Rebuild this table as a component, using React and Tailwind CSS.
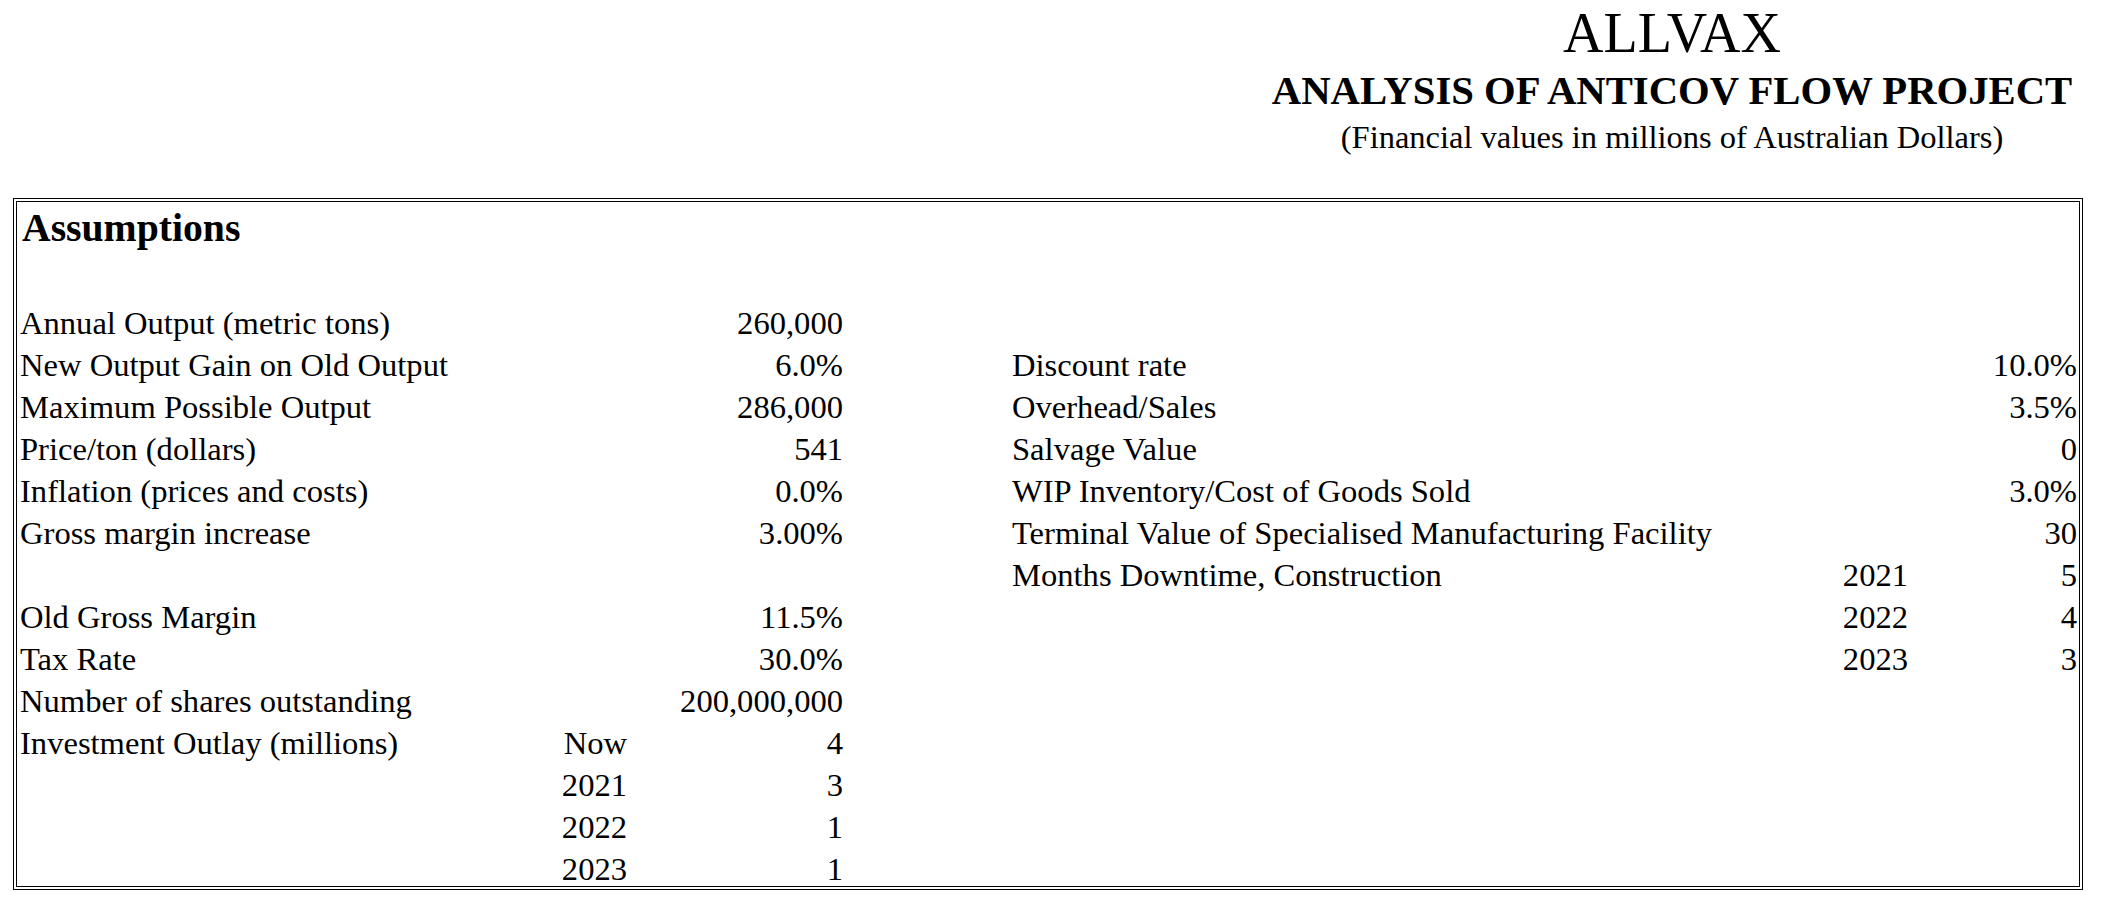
import React from "react";

const rows = [
  ["Annual Output (metric tons)", "", "260,000", "", "", ""],
  ["New Output Gain on Old Output", "", "6.0%", "Discount rate", "", "10.0%"],
  ["Maximum Possible Output", "", "286,000", "Overhead/Sales", "", "3.5%"],
  ["Price/ton (dollars)", "", "541", "Salvage Value", "", "0"],
  ["Inflation (prices and costs)", "", "0.0%", "WIP Inventory/Cost of Goods Sold", "", "3.0%"],
  ["Gross margin increase", "", "3.00%", "Terminal Value of Specialised Manufacturing Facility", "", "30"],
  ["", "", "", "Months Downtime, Construction", "2021", "5"],
  ["Old Gross Margin", "", "11.5%", "", "2022", "4"],
  ["Tax Rate", "", "30.0%", "", "2023", "3"],
  ["Number of shares outstanding", "", "200,000,000", "", "", ""],
  ["Investment Outlay (millions)", "Now", "4", "", "", ""],
  ["", "2021", "3", "", "", ""],
  ["", "2022", "1", "", "", ""],
  ["", "2023", "1", "", "", ""],
];

export default function App() {
  return (
    <div className="w-[2105px] h-[909px] bg-white text-black font-['Liberation_Serif','Times_New_Roman',serif] overflow-hidden">
      <div className="w-[2070px] ml-[13px] flex flex-col items-end">
        <div className="w-[822px] flex flex-col items-center">
          <div className="h-[66px] flex items-center text-[56px] leading-none whitespace-nowrap">ALLVAX</div>
          <div className="h-[50px] flex items-center text-[40.7px] leading-none font-bold whitespace-nowrap">ANALYSIS OF ANTICOV FLOW PROJECT</div>
          <div className="h-[42px] flex items-center text-[32.5px] leading-none whitespace-nowrap">(Financial values in millions of Australian Dollars)</div>
        </div>
      </div>
      <div className="mt-[40px] ml-[13px] w-[2070px] border-4 border-double border-black">
        <div className="h-[54px] flex items-center pl-[5px] text-[39.7px] font-bold leading-none">Assumptions</div>
        <div className="h-[42px]" />
        <div className="grid grid-cols-[483px_127px_216px_169px_738px_158px_169px] pr-[2px] text-[32.6px] leading-[42px] whitespace-nowrap">
          {rows.map((r, i) => (
            <React.Fragment key={i}>
              <div className="h-[42px] pt-[4px] pl-[3px]">{r[0]}</div>
              <div className="h-[42px] pt-[4px] text-right">{r[1]}</div>
              <div className="h-[42px] pt-[4px] text-right">{r[2]}</div>
              <div className="h-[42px]" />
              <div className="h-[42px] pt-[4px]">{r[3]}</div>
              <div className="h-[42px] pt-[4px] text-right">{r[4]}</div>
              <div className="h-[42px] pt-[4px] text-right">{r[5]}</div>
            </React.Fragment>
          ))}
        </div>
      </div>
    </div>
  );
}
